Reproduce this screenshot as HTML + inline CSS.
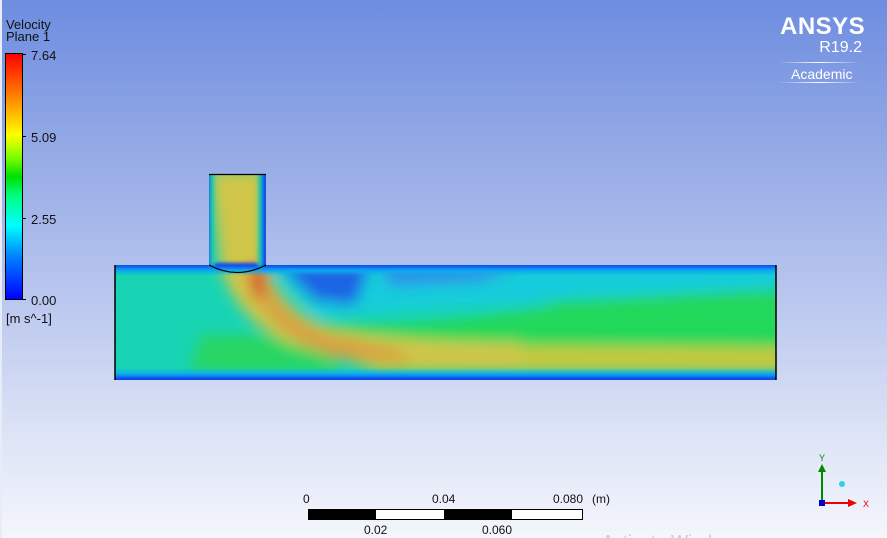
<!DOCTYPE html>
<html><head><meta charset="utf-8"><style>
html,body{margin:0;padding:0}
body{width:887px;height:538px;overflow:hidden;position:relative;font-family:"Liberation Sans",sans-serif;
background:linear-gradient(to bottom,#6d8de0 0%,#97ace6 30%,#b9c6ee 55%,#dce3f6 80%,#f4f6fc 100%)}
.t{position:absolute;font-size:13px;color:#111;line-height:1}
</style></head><body>
<div style="position:absolute;left:0;top:0;width:2px;height:538px;background:#e8ecf6"></div>
<div class="t" style="left:6px;top:18px">Velocity</div>
<div class="t" style="left:6px;top:30px">Plane 1</div>
<div style="position:absolute;left:5px;top:53px;width:16px;height:245px;border:1px solid #000;background:linear-gradient(to bottom,#ff0000 0%,#ff8000 17%,#ffff00 33%,#80ff00 42%,#00e000 50%,#00ff80 58%,#00ffff 70%,#0080ff 83%,#0000ff 100%)"></div>
<div style="position:absolute;left:22px;top:54px;width:4px;height:1px;background:#000"></div>
<div style="position:absolute;left:22px;top:136px;width:4px;height:1px;background:#000"></div>
<div style="position:absolute;left:22px;top:218px;width:4px;height:1px;background:#000"></div>
<div style="position:absolute;left:22px;top:299px;width:4px;height:1px;background:#000"></div>
<div class="t" style="left:31px;top:49px">7.64</div>
<div class="t" style="left:31px;top:131px">5.09</div>
<div class="t" style="left:31px;top:213px">2.55</div>
<div class="t" style="left:31px;top:294px">0.00</div>
<div class="t" style="left:6px;top:312px">[m s^-1]</div>

<div style="position:absolute;left:780px;top:13px;color:#fff;font-size:24px;font-weight:bold;letter-spacing:0.5px">ANSYS</div>
<div style="position:absolute;right:25px;top:39px;color:#fff;font-size:16px">R19.2</div>
<div style="position:absolute;left:778px;top:62px;width:82px;height:1px;background:linear-gradient(to right,transparent,#fff,transparent)"></div>
<div style="position:absolute;left:791px;top:66px;color:#fff;font-size:14px">Academic</div>
<div style="position:absolute;left:778px;top:82px;width:82px;height:1px;background:linear-gradient(to right,transparent,#fff,transparent)"></div>

<svg style="position:absolute;left:0;top:0" width="887" height="538">
<defs>
<clipPath id="c"><path d="M115 265 H209 V174 H266 V265 H776 V380 H115 Z"/></clipPath>
<filter id="b" filterUnits="userSpaceOnUse" x="0" y="100" width="887" height="350"><feGaussianBlur stdDeviation="7"/></filter>
<filter id="b2" filterUnits="userSpaceOnUse" x="0" y="100" width="887" height="350"><feGaussianBlur stdDeviation="1.8"/></filter>
</defs>
<g clip-path="url(#c)">
<rect x="100" y="160" width="700" height="240" fill="#18d4b4"/>
<g filter="url(#b)">
<path d="M268 266 H790 V305 C700 305 600 308 500 305 L420 308 L320 318 Z" fill="#14ccdc"/>
<path d="M280 266 L370 266 L355 305 L315 300 Z" fill="#1e64e6"/>
<path d="M380 266 L520 266 L480 282 L390 286 Z" fill="#2a90ea"/>
<path d="M290 322 C380 328 480 322 560 300 L790 288 V348 L300 348 Z" fill="#20d85a"/>
<path d="M200 335 L260 335 L330 352 L340 372 L190 372 Z" fill="#2ad650" opacity="0.8"/>
<path d="M290 340 C360 348 460 345 790 348 V372 H380 Z" fill="#c6c83c"/>
<path d="M209 170 H266 L266 262 C272 290 295 318 335 330 C385 338 430 342 520 343 L520 368 C430 368 340 362 285 342 C245 322 228 292 220 266 Z" fill="#cfc648"/>
<path d="M248 266 L264 262 C268 292 288 318 325 334 L400 350 L410 362 L335 358 C295 344 268 322 254 292 Z" fill="#d7a042"/>
<path d="M248 268 L264 266 L263 298 L253 298 Z" fill="#d84a30"/>
</g>
<g filter="url(#b2)">
<rect x="100" y="263" width="700" height="6" fill="#0a38f0"/>
<rect x="100" y="268" width="700" height="5" fill="#10a8f0"/>
<rect x="100" y="376" width="700" height="6" fill="#0a38f0"/>
<rect x="100" y="371" width="700" height="5" fill="#10b0e8"/>
<rect x="205" y="170" width="6" height="96" fill="#0a40f0"/>
<rect x="262" y="170" width="6" height="96" fill="#0a40f0"/>
<rect x="210" y="170" width="4" height="96" fill="#20c8a0"/>
<rect x="258" y="170" width="4" height="96" fill="#20c8a0"/>
</g>
</g>
<line x1="115" y1="265" x2="115" y2="380" stroke="#000" stroke-width="1.5"/>
<line x1="776" y1="265" x2="776" y2="380" stroke="#000" stroke-width="1.5"/>
<line x1="209" y1="174.5" x2="266" y2="174.5" stroke="#000" stroke-width="1.2"/>
<path d="M209 265 Q237 280 266 265" fill="none" stroke="#000" stroke-width="1.2"/>

<rect x="308.5" y="509.5" width="274" height="10" fill="#fff" stroke="#000"/>
<rect x="308" y="509" width="68" height="11" fill="#000"/>
<rect x="444" y="509" width="68" height="11" fill="#000"/>
<g font-family="Liberation Sans,sans-serif" font-size="12" fill="#111">
<text x="303" y="503">0</text><text x="432" y="503">0.04</text><text x="553" y="503">0.080</text><text x="592" y="503">(m)</text>
<text x="364" y="534">0.02</text><text x="482" y="534">0.060</text>
</g>
<text x="602" y="548" font-family="Liberation Sans,sans-serif" font-size="18" fill="#c8ccd4">Activate Windows</text>
<line x1="822" y1="503" x2="822" y2="470" stroke="#080" stroke-width="2"/>
<path d="M818 472 L822 464 L826 472 Z" fill="#080"/>
<text x="819" y="461" font-size="9" fill="#080" font-family="Liberation Sans,sans-serif">Y</text>
<line x1="822" y1="503" x2="850" y2="503" stroke="#e00" stroke-width="2"/>
<path d="M848 499 L857 503 L848 507 Z" fill="#e00"/>
<text x="863" y="507" font-size="9" fill="#e00" font-family="Liberation Sans,sans-serif">X</text>
<rect x="819" y="500" width="6" height="6" fill="#00c"/>
<circle cx="842" cy="484" r="3" fill="#30d0e8"/>
</svg>
</body></html>
